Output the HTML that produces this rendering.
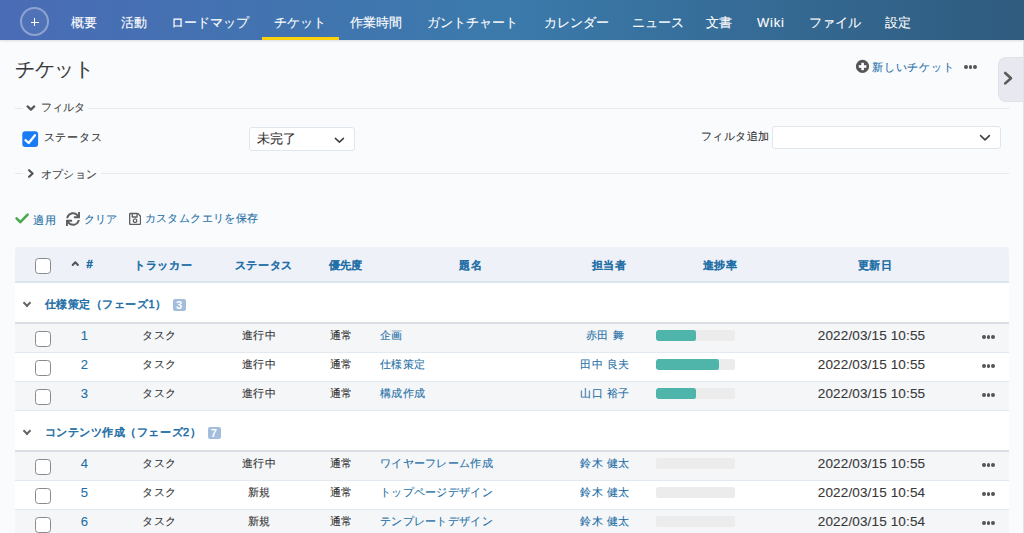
<!DOCTYPE html>
<html><head><meta charset="utf-8"><title>チケット</title>
<style>
*{box-sizing:border-box;margin:0;padding:0}
html,body{width:1024px;height:533px;overflow:hidden}
body{font-family:"Liberation Sans",sans-serif;background:#f9fbfd;color:#333;position:relative;font-size:12px;-webkit-text-stroke:0.1px currentColor}
.abs{position:absolute;white-space:nowrap}
.b{-webkit-text-stroke:0.55px currentColor}
#hdr{position:absolute;left:0;top:0;width:1024px;height:40px;background:linear-gradient(90deg,#4a6cb6 0%,#3b7aab 50%,#2f5b7e 100%);box-shadow:0 1px 2px rgba(0,0,0,.12)}
#hdr .plus{position:absolute;left:20px;top:7px;width:29px;height:29px;border:2px solid rgba(255,255,255,.35);border-radius:50%;background:rgba(255,255,255,.04)}
#hdr .plus:before{content:"";position:absolute;left:8.5px;top:12.5px;width:8px;height:1.8px;background:#fff}
#hdr .plus:after{content:"";position:absolute;left:11.6px;top:9.4px;width:1.8px;height:8px;background:#fff}
#hdr .nav{position:absolute;top:15px;color:#fff;font-size:13px;line-height:16px;white-space:nowrap}
#hdr .sel{position:absolute;left:262px;top:37px;width:77px;height:3px;background:#fdd20a}
.title{left:15px;top:56.5px;font-size:20px;line-height:24px;letter-spacing:-0.35px;color:#3a3a3a}
.lnk{color:#1f6fa6}
.rt{position:absolute;left:998px;top:57px;width:26px;height:45px;background:#e8e8f0;border:1px solid #e1e1e7;border-right:0;border-radius:8px 0 0 8px}
.vline{position:absolute;left:1023px;top:40px;width:1px;height:493px;background:#e2e2e4}
.wline{display:none}
.hr{position:absolute;height:1px;background:#e6e9e9}
.cb{position:absolute;width:16px;height:16px;border:1.5px solid #8a8a8a;border-radius:3.5px;background:#fff}
.sel1{position:absolute;background:#fff;border:1px solid #e0e6ee;border-radius:3px}
.t115{font-size:11.5px;line-height:16px}
#tbl{position:absolute;left:15px;top:247px;width:994px;height:300px;overflow:hidden;border-radius:4px 4px 0 0}
.th{position:absolute;left:0;top:0;width:994px;height:36px;background:#eef1f8;border-bottom:2px solid #dce5f0}
.th span{position:absolute;top:10.7px;color:#1f6fa6;font-size:11px;line-height:14px;white-space:nowrap;-webkit-text-stroke:0.65px currentColor}
.grp{position:absolute;left:0;width:994px;height:41px;background:#fff;border-bottom:2px solid #dadde2}
.row{position:absolute;left:0;width:994px;height:29px;border-bottom:1px solid #e2e9f1}
.row.odd{background:#f4f6f8}
.row.even{background:#fff}
.row span{position:absolute;top:4px;font-size:11px;letter-spacing:0.5px;line-height:14px;white-space:nowrap}
.c{transform:translateX(-50%)}
.num{font-size:13px!important;top:5px!important}
.bar{position:absolute;left:641px;top:6px;width:79px;height:11px;border-radius:2.5px;background:#ececec;overflow:hidden}
.bar i{position:absolute;left:0;top:0;height:11px;background:#4fb5aa;border-radius:2.5px}
.dots{position:absolute;width:14px;height:5px}
.dots i{position:absolute;top:0;width:3.8px;height:3.8px;border-radius:50%;background:#555}
.grp .chev{position:absolute;left:9px;top:16.9px;width:6px;height:6px;border-right:2px solid #666;border-bottom:2px solid #666;transform:rotate(45deg)}
.grp .gname{position:absolute;left:29.5px;top:12.8px;letter-spacing:0.55px;color:#1f6fa6;font-size:11px;line-height:16px;white-space:nowrap;-webkit-text-stroke:0.55px currentColor}
.grp .badge{display:inline-block;margin-left:6.2px;width:13px;height:12px;background:#a2bedc;color:#fff;font-size:11px;line-height:12px;font-weight:bold;text-align:center;border-radius:2px;vertical-align:0;position:relative;top:1.5px;-webkit-text-stroke:0}
.dt{top:5px!important;font-size:13.5px!important;letter-spacing:0.15px!important;color:#383838}
.subj{letter-spacing:0.3px!important}

</style></head><body>
<div id="hdr">
  <div class="plus"></div>
  <span class="nav" style="left:71px">概要</span>
  <span class="nav" style="left:121px">活動</span>
  <span class="nav" style="left:170.7px">ロードマップ</span>
  <span class="nav" style="left:274px">チケット</span>
  <span class="nav" style="left:350px">作業時間</span>
  <span class="nav" style="left:427px">ガントチャート</span>
  <span class="nav" style="left:544px">カレンダー</span>
  <span class="nav" style="left:632px">ニュース</span>
  <span class="nav" style="left:706px">文書</span>
  <span class="nav" style="left:757px;letter-spacing:0.8px">Wiki</span>
  <span class="nav" style="left:809px">ファイル</span>
  <span class="nav" style="left:885px">設定</span>
  <div class="sel"></div>
</div>
<div class="abs title">チケット</div>
<svg class="abs" style="left:852px;top:56px" width="22" height="22" viewBox="852 56 22 22"><circle cx="862.5" cy="66.4" r="6.6" fill="#555"/><rect x="858.8" y="65.2" width="7.6" height="2.6" fill="#fff"/><rect x="861.3" y="62.8" width="2.6" height="7.4" fill="#fff"/></svg>
<div class="abs lnk" style="left:872px;top:59px;font-size:11px;line-height:16px;letter-spacing:0.8px">新しいチケット</div>
<div class="dots" style="left:964px;top:64.8px"><i style="left:0"></i><i style="left:4.7px"></i><i style="left:9.4px"></i></div>
<div class="rt"></div>
<svg class="abs" style="left:998px;top:66px" width="20" height="24" viewBox="998 66 20 24"><path d="M1005.2 73 L1011 78.2 L1005.2 83.4" fill="none" stroke="#5a5a5a" stroke-width="2.6" stroke-linecap="round" stroke-linejoin="round"/></svg>
<div class="vline"></div><div class="wline"></div>

<div class="hr" style="left:15px;top:108px;width:8px"></div>
<div class="hr" style="left:88px;top:108px;width:921px"></div>
<svg class="abs" style="left:20px;top:98px" width="20" height="20" viewBox="20 98 20 20"><path d="M27.6 106.4 L30.9 109.6 L34.2 106.4" fill="none" stroke="#555" stroke-width="2.2" stroke-linecap="round" stroke-linejoin="round"/></svg>
<div class="abs" style="left:40.5px;top:99px;font-size:11px;line-height:16px;letter-spacing:0.25px;color:#444">フィルタ</div>
<svg class="abs" style="left:18px;top:126px" width="24" height="26" viewBox="18 126 24 26"><rect x="22.3" y="131.3" width="15.8" height="15.8" rx="3" fill="#1b7bf5"/><path d="M25.5 140.2 L28.7 143 L35 135.3" fill="none" stroke="#fff" stroke-width="2.3" stroke-linecap="round" stroke-linejoin="round"/></svg>
<div class="abs" style="left:43.8px;top:129.2px;font-size:11px;line-height:16px;letter-spacing:0.7px;color:#333">ステータス</div>
<div class="sel1" style="left:249px;top:127px;width:106px;height:24px"></div>
<div class="abs" style="left:257px;top:130px;font-size:13px;line-height:17px;letter-spacing:-0.2px;color:#333">未完了</div>
<svg class="abs" style="left:328px;top:130px" width="24" height="20" viewBox="328 130 24 20"><path d="M335.4 138.4 L339.4 142.2 L343.4 138.4" fill="none" stroke="#444" stroke-width="1.6" stroke-linecap="round" stroke-linejoin="round"/></svg>
<div class="abs" style="left:701px;top:128px;font-size:11px;line-height:16px;letter-spacing:0.4px;color:#333">フィルタ追加</div>
<div class="sel1" style="left:772px;top:126px;width:229px;height:23px"></div>
<svg class="abs" style="left:974px;top:130px" width="24" height="16" viewBox="974 130 24 16"><path d="M980.6 135.6 L985 139.8 L989.4 135.6" fill="none" stroke="#444" stroke-width="1.6" stroke-linecap="round" stroke-linejoin="round"/></svg>

<div class="hr" style="left:15px;top:173px;width:8px"></div>
<div class="hr" style="left:101px;top:173px;width:908px"></div>
<svg class="abs" style="left:20px;top:164px" width="20" height="20" viewBox="20 164 20 20"><path d="M29.1 170.2 L32.6 173.5 L29.1 176.8" fill="none" stroke="#555" stroke-width="2.2" stroke-linecap="round" stroke-linejoin="round"/></svg>
<div class="abs" style="left:40.8px;top:165.5px;font-size:11px;line-height:16px;letter-spacing:0.3px;color:#444">オプション</div>

<svg class="abs" style="left:10px;top:208px" width="30" height="22" viewBox="10 208 30 22"><path d="M16.6 218.4 L20.3 222.2 L27.6 214.6" fill="none" stroke="#4aa84e" stroke-width="2.6" stroke-linecap="round" stroke-linejoin="round"/></svg>
<div class="abs lnk" style="left:33px;top:212px;font-size:11px;line-height:16px;letter-spacing:0.55px">適用</div>
<svg class="abs" style="left:65.7px;top:211.9px" width="14" height="14" viewBox="0 0 512 512"><path fill="#5e5e5e" d="M440.65 12.57l4 82.77A247.16 247.16 0 0 0 255.83 8C134.73 8 33.91 94.92 12.29 209.82A12 12 0 0 0 24.09 224h49.05a12 12 0 0 0 11.670-9.26 175.91 175.910 0 0 1 317-56.94l-101.46-4.86a12 12 0 0 0-12.57 12v47.41a12 12 0 0 0 12 12H500a12 12 0 0 0 12-12V12a12 12 0 0 0-12-12h-47.37a12 12 0 0 0-11.98 12.57zM255.83 432a175.61 175.61 0 0 1-146-77.8l101.8 4.87a12 12 0 0 0 12.57-12v-47.4a12 12 0 0 0-12-12H12a12 12 0 0 0-12 12V500a12 12 0 0 0 12 12h47.35a12 12 0 0 0 12-12.6l-4.15-82.57A247.17 247.17 0 0 0 255.830 504c121.11 0 221.93-86.92 243.55-201.82a12 12 0 0 0-11.8-14.18h-49.05a12 12 0 0 0-11.67 9.26A175.86 175.86 0 0 1 255.83 432z"/></svg>
<div class="abs lnk" style="left:83.5px;top:211px;font-size:11px;line-height:16px;letter-spacing:0.4px">クリア</div>
<svg class="abs" style="left:128.5px;top:211.8px" width="12.2" height="13.9" viewBox="0 0 448 512"><path fill="#5e5e5e" d="M433.941 129.941l-83.882-83.882A48 48 0 0 0 316.118 32H48C21.49 32 0 53.49 0 80v352c0 26.51 21.49 48 48 48h352c26.51 0 48-21.49 48-48V163.882a48 48 0 0 0-14.059-33.941zM272 80v80H144V80h128zm122 352H54a6 6 0 0 1-6-6V86a6 6 0 0 1 6-6h42v104c0 13.255 10.745 24 24 24h176c13.255 0 24-10.745 24-24V83.882l78.243 78.243a6 6 0 0 1 1.757 4.243V426a6 6 0 0 1-6 6zM224 232c-48.523 0-88 39.477-88 88s39.477 88 88 88 88-39.477 88-88-39.477-88-88-88zm0 128c-22.056 0-40-17.944-40-40s17.944-40 40-40 40 17.944 40 40-17.944 40-40 40z"/></svg>
<div class="abs lnk" style="left:144.7px;top:210.2px;font-size:11px;line-height:16px;letter-spacing:0.4px">カスタムクエリを保存</div>

<div id="tbl">
  <div class="th">
    <div class="cb" style="left:20px;top:11px"></div>
    <svg style="position:absolute;left:51px;top:7px" width="32" height="22" viewBox="66 254 32 22"><path d="M72.7 265 L75.3 262.2 L77.9 265" fill="none" stroke="#555" stroke-width="2" stroke-linecap="round" stroke-linejoin="round"/></svg>
    <span style="left:71.6px;top:9.5px">#</span>
    <span style="left:118.7px;letter-spacing:0.9px">トラッカー</span>
    <span style="left:219.5px;letter-spacing:0.7px">ステータス</span>
    <span style="left:313.5px;letter-spacing:0.4px">優先度</span>
    <span style="left:444px;letter-spacing:0.8px">題名</span>
    <span style="left:577.3px;letter-spacing:0.2px">担当者</span>
    <span style="left:688px;letter-spacing:0.4px">進捗率</span>
    <span style="left:843px;letter-spacing:0.3px">更新日</span>
  </div>
<div class="grp" style="top:36px"><b class="chev"></b><span class="gname">仕様策定（フェーズ1）<span class="badge">3</span></span></div>
<div class="row odd" style="top:77px"><div class="cb" style="left:20px;top:7px"></div><span class="c lnk num" style="left:69.5px">1</span><span class="c" style="left:144.5px">タスク</span><span class="c" style="left:244px">進行中</span><span class="c" style="left:326px">通常</span><span class="lnk subj" style="left:365px">企画</span><span class="c lnk" style="left:590px">赤田 舞</span><div class="bar"><i style="width:40px"></i></div><span class="c dt" style="left:856.5px">2022/03/15 10:55</span><div class="dots" style="left:967px;top:11px"><i style="left:0"></i><i style="left:4.7px"></i><i style="left:9.4px"></i></div></div>
<div class="row even" style="top:106px"><div class="cb" style="left:20px;top:7px"></div><span class="c lnk num" style="left:69.5px">2</span><span class="c" style="left:144.5px">タスク</span><span class="c" style="left:244px">進行中</span><span class="c" style="left:326px">通常</span><span class="lnk subj" style="left:365px">仕様策定</span><span class="c lnk" style="left:590px">田中 良夫</span><div class="bar"><i style="width:63px"></i></div><span class="c dt" style="left:856.5px">2022/03/15 10:55</span><div class="dots" style="left:967px;top:11px"><i style="left:0"></i><i style="left:4.7px"></i><i style="left:9.4px"></i></div></div>
<div class="row odd" style="top:135px"><div class="cb" style="left:20px;top:7px"></div><span class="c lnk num" style="left:69.5px">3</span><span class="c" style="left:144.5px">タスク</span><span class="c" style="left:244px">進行中</span><span class="c" style="left:326px">通常</span><span class="lnk subj" style="left:365px">構成作成</span><span class="c lnk" style="left:590px">山口 裕子</span><div class="bar"><i style="width:40px"></i></div><span class="c dt" style="left:856.5px">2022/03/15 10:55</span><div class="dots" style="left:967px;top:11px"><i style="left:0"></i><i style="left:4.7px"></i><i style="left:9.4px"></i></div></div>
<div class="grp" style="top:164px"><b class="chev"></b><span class="gname">コンテンツ作成（フェーズ2）<span class="badge">7</span></span></div>
<div class="row odd" style="top:205px"><div class="cb" style="left:20px;top:7px"></div><span class="c lnk num" style="left:69.5px">4</span><span class="c" style="left:144.5px">タスク</span><span class="c" style="left:244px">進行中</span><span class="c" style="left:326px">通常</span><span class="lnk subj" style="left:365px">ワイヤーフレーム作成</span><span class="c lnk" style="left:590px">鈴木 健太</span><div class="bar"></div><span class="c dt" style="left:856.5px">2022/03/15 10:55</span><div class="dots" style="left:967px;top:11px"><i style="left:0"></i><i style="left:4.7px"></i><i style="left:9.4px"></i></div></div>
<div class="row even" style="top:234px"><div class="cb" style="left:20px;top:7px"></div><span class="c lnk num" style="left:69.5px">5</span><span class="c" style="left:144.5px">タスク</span><span class="c" style="left:244px">新規</span><span class="c" style="left:326px">通常</span><span class="lnk subj" style="left:365px">トップページデザイン</span><span class="c lnk" style="left:590px">鈴木 健太</span><div class="bar"></div><span class="c dt" style="left:856.5px">2022/03/15 10:54</span><div class="dots" style="left:967px;top:11px"><i style="left:0"></i><i style="left:4.7px"></i><i style="left:9.4px"></i></div></div>
<div class="row odd" style="top:263px"><div class="cb" style="left:20px;top:7px"></div><span class="c lnk num" style="left:69.5px">6</span><span class="c" style="left:144.5px">タスク</span><span class="c" style="left:244px">新規</span><span class="c" style="left:326px">通常</span><span class="lnk subj" style="left:365px">テンプレートデザイン</span><span class="c lnk" style="left:590px">鈴木 健太</span><div class="bar"></div><span class="c dt" style="left:856.5px">2022/03/15 10:54</span><div class="dots" style="left:967px;top:11px"><i style="left:0"></i><i style="left:4.7px"></i><i style="left:9.4px"></i></div></div>
</div>

</body></html>
